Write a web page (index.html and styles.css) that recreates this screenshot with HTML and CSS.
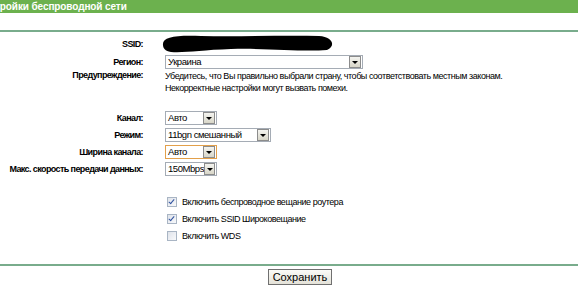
FILE: index.html
```html
<!DOCTYPE html>
<html lang="ru">
<head>
  <meta charset="UTF-8">
  <title>Настройки беспроводной сети</title>
  <link rel="stylesheet" href="styles.css">
</head>
<body>

  <div class="title">Настройки беспроводной сети</div>
  <div class="spacer"></div>

  <table class="form">
    <tr>
      <td class="label">SSID:</td>
      <td class="value">
        <svg class="blot" width="175" height="18" viewBox="0 0 175 18">
          <path d="M2 10 C1 2 14 0 40 1 C80 2 120 0 158 1 C172 2 175 11 166 15 C140 17 110 13 70 14 C40 15 24 18 10 17 C4 16 2 13 2 10 Z" fill="#000"/>
        </svg>
      </td>
    </tr>
    <tr>
      <td class="label">Регион:</td>
      <td class="value">
        <div class="select wide">
          <span class="text">Украина</span>
          <span class="arrow"></span>
        </div>
      </td>
    </tr>
    <tr class="top">
      <td class="label">Предупреждение:</td>
      <td class="value note">Убедитесь, что Вы правильно выбрали страну, чтобы соответствовать местным законам.<br>Некорректные настройки могут вызвать помехи.</td>
    </tr>
    <tr class="blank"><td></td><td></td></tr>
    <tr>
      <td class="label">Канал:</td>
      <td class="value">
        <div class="select short">
          <span class="text">Авто</span>
          <span class="arrow"></span>
        </div>
      </td>
    </tr>
    <tr>
      <td class="label">Режим:</td>
      <td class="value">
        <div class="select mid">
          <span class="text">11bgn смешанный</span>
          <span class="arrow"></span>
        </div>
      </td>
    </tr>
    <tr>
      <td class="label">Ширина канала:</td>
      <td class="value">
        <div class="select short focus">
          <span class="text">Авто</span>
          <span class="arrow"></span>
        </div>
      </td>
    </tr>
    <tr>
      <td class="label">Макс. скорость передачи данных:</td>
      <td class="value">
        <div class="select short">
          <span class="text">150Mbps</span>
          <span class="arrow"></span>
        </div>
      </td>
    </tr>
    <tr class="blank2"><td></td><td></td></tr>
    <tr class="check">
      <td></td>
      <td class="value"><span class="box on"></span>Включить беспроводное вещание роутера</td>
    </tr>
    <tr class="check">
      <td></td>
      <td class="value"><span class="box on"></span>Включить SSID Широковещание</td>
    </tr>
    <tr class="check">
      <td></td>
      <td class="value"><span class="box"></span>Включить WDS</td>
    </tr>
  </table>

  <div class="footer">
    <button class="save">Сохранить</button>
  </div>

</body>
</html>
```

FILE: styles.css
```css
body {
  margin: 0;
  background-color: #fff;
  font-family: 'Liberation Sans', Arial, sans-serif;
  font-size: 9px;
  letter-spacing: -0.45px;
  color: #000;
  overflow: hidden;
}

.title {
  height: 13px;
  line-height: 13px;
  background-color: #6cb14e;
  color: #fff;
  font-weight: bold;
  font-size: 10px;
  letter-spacing: -0.1px;
  text-indent: -23px;
  white-space: nowrap;
}

.spacer {
  height: 17px;
  border-bottom: 2px solid #79ac8c;
}

.form {
  border-collapse: collapse;
  margin-top: 3px;
}

.form td {
  padding: 0;
  height: 17px;
}

.label {
  width: 143px;
  text-align: right;
  font-weight: bold;
  letter-spacing: -0.6px;
  padding-right: 22px !important;
  white-space: nowrap;
}

.value {
  white-space: nowrap;
}

.blot {
  display: block;
  margin-left: -4px;
}

tr.top td {
  vertical-align: top;
  height: 26px;
}

.note {
  line-height: 12px;
}

tr.blank td {
  height: 13px;
}

tr.blank2 td {
  height: 16px;
}

.select {
  display: flex;
  align-items: center;
  height: 14px;
  border: 1px solid #a5acb5;
  background-color: #fff;
  box-sizing: border-box;
}

.select.wide { width: 198px; }
.select.mid { width: 106px; }
.select.short { width: 52px; }

.select.focus {
  border-color: #e3a04a;
}

.select .text {
  flex: 1;
  padding-left: 2px;
  font-size: 9.5px;
}

.select .arrow {
  width: 10px;
  height: 10px;
  margin-right: 1px;
  border: 1px solid #8c8c8c;
  background: linear-gradient(#f4f4f0, #d8d6c8);
  position: relative;
}

.select .arrow::after {
  content: "";
  position: absolute;
  left: 2px;
  top: 4px;
  border-left: 3px solid transparent;
  border-right: 3px solid transparent;
  border-top: 3px solid #000;
}

tr.check td {
  height: 17px;
}

.box {
  display: inline-block;
  width: 8px;
  height: 8px;
  margin: 0 5px 0 2px;
  border: 1px solid #a9b5c4;
  background: linear-gradient(135deg, #dfe3ea, #f8f9fb);
  vertical-align: -2px;
  position: relative;
}

.box.on::after {
  content: "";
  position: absolute;
  left: 2px;
  top: 0px;
  width: 2px;
  height: 5px;
  border-right: 1.5px solid #2f52a0;
  border-bottom: 1.5px solid #2f52a0;
  transform: rotate(40deg);
}

.footer {
  margin-top: 20px;
  border-top: 2px solid #79ac8c;
  text-align: center;
  padding-top: 3px;
}

.save {
  font-family: 'Liberation Sans', Arial, sans-serif;
  font-size: 11px;
  letter-spacing: 0;
  padding: 0 4px;
  height: 16px;
  border: 1px solid #707070;
  background: linear-gradient(#fbfbf8, #e4e2d8);
  margin-left: 22px;
}
```
